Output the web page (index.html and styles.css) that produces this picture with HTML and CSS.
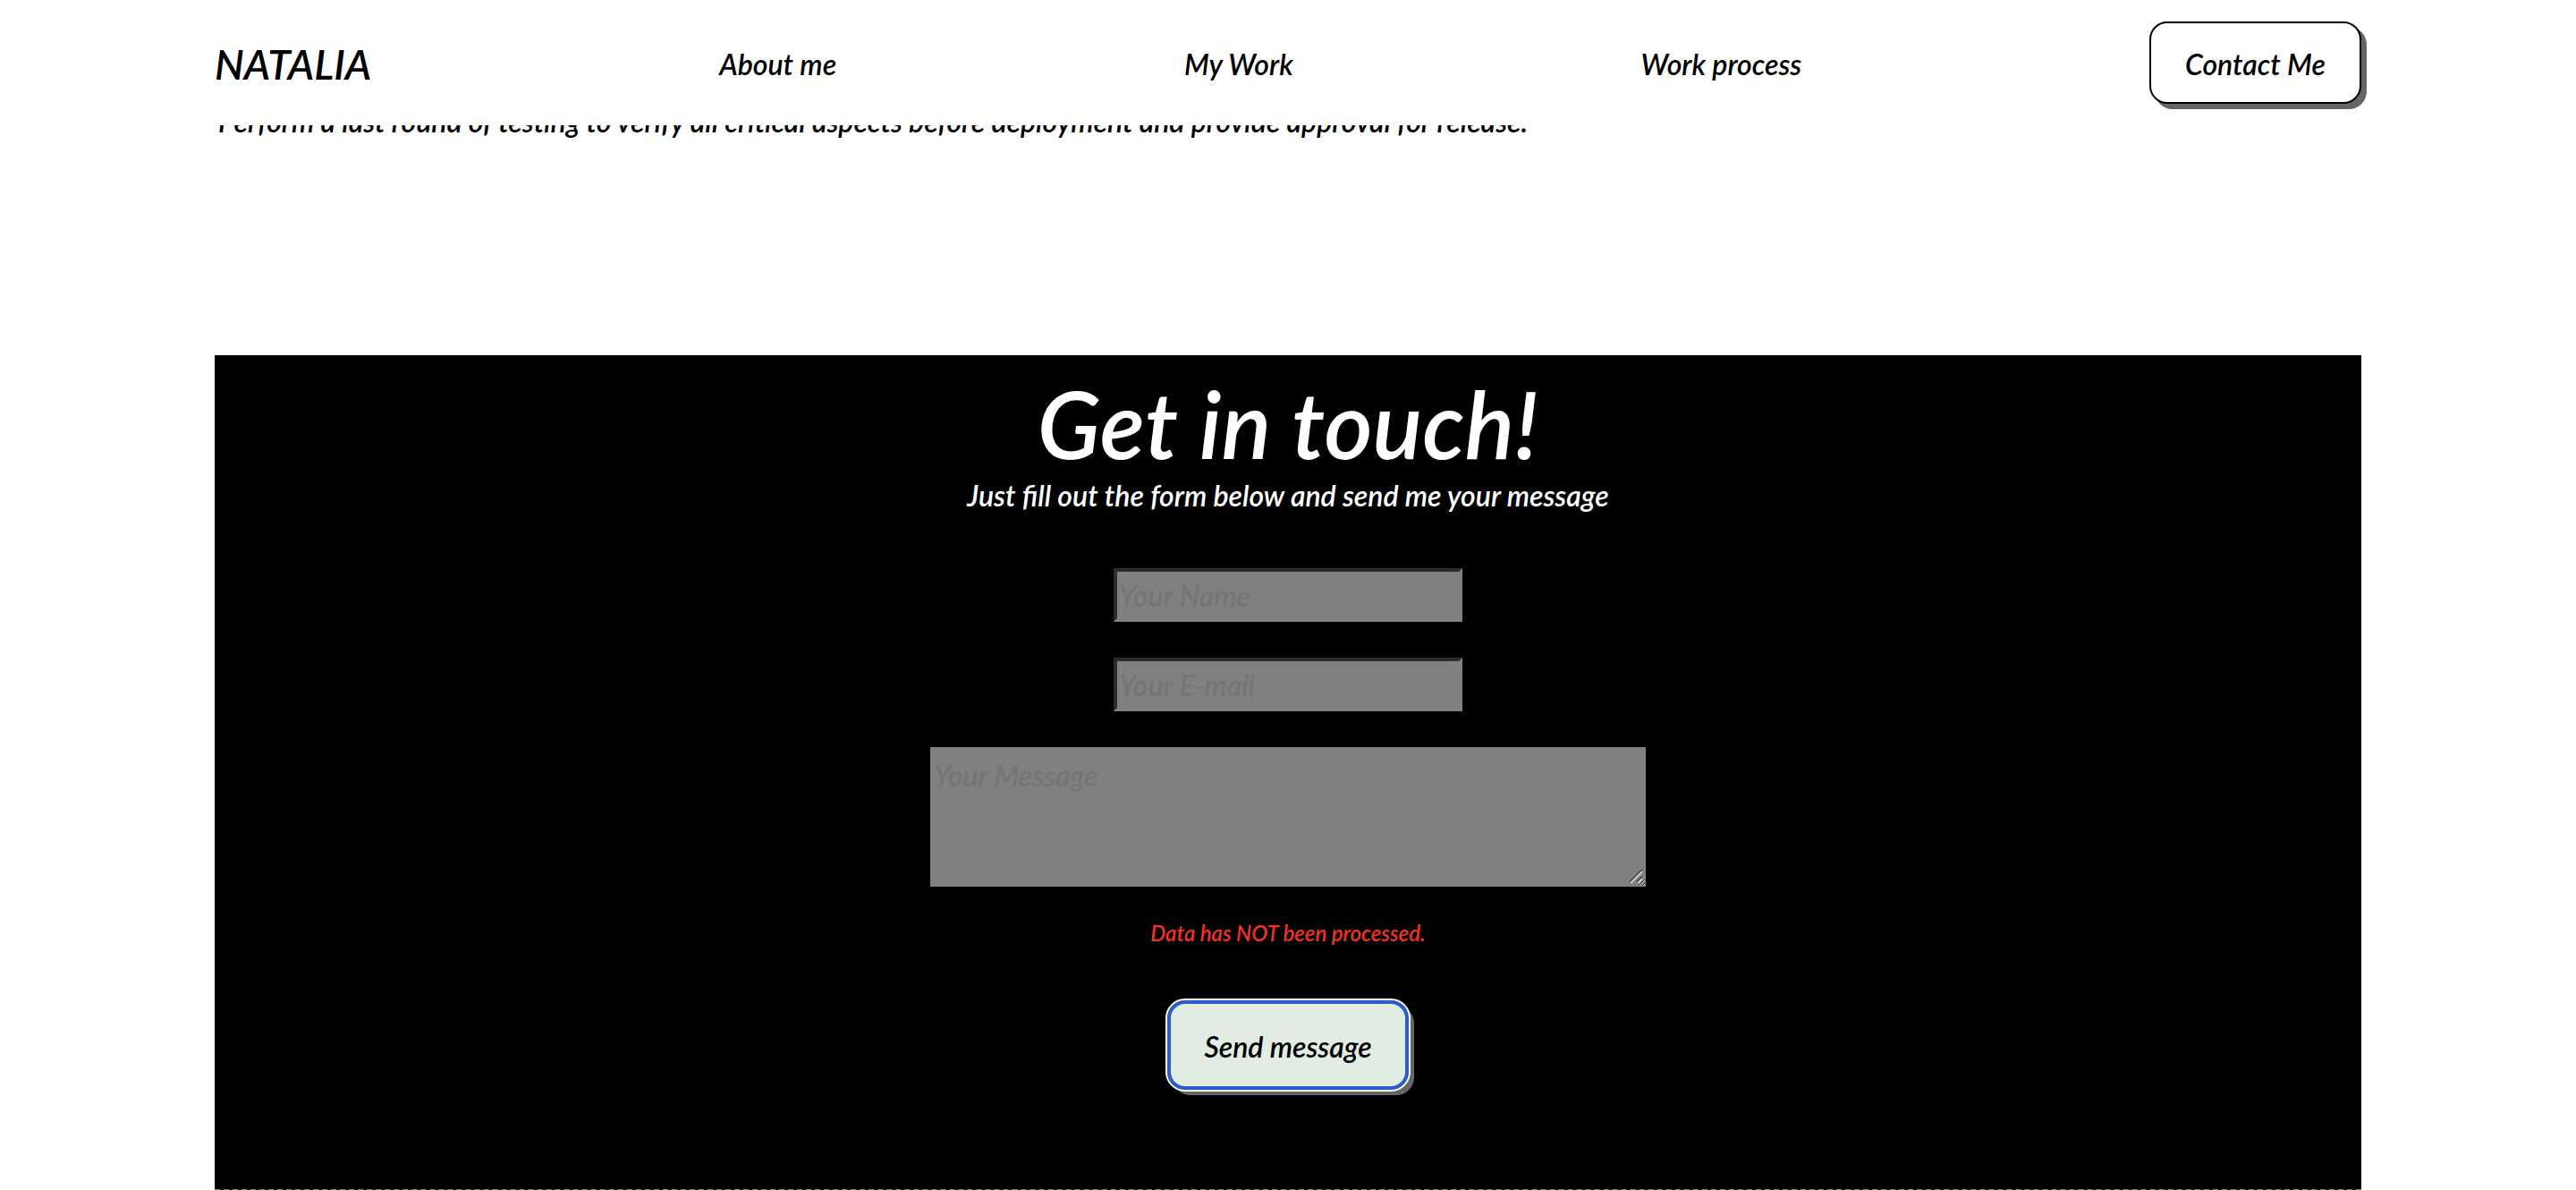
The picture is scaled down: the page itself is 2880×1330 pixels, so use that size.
FILE: index.html
```html
<!DOCTYPE html>
<html lang="en">
<head>
<meta charset="utf-8">
<meta name="viewport" content="width=device-width, initial-scale=1">
<title>Natalia</title>
<link rel="stylesheet" href="styles.css">
</head>
<body>
<header class="header">
  <nav class="nav">
    <a class="logo" href="#top">NATALIA</a>
    <a class="nav-link" href="#about">About me</a>
    <a class="nav-link" href="#work">My Work</a>
    <a class="nav-link" href="#process">Work process</a>
    <button class="button contact-button" type="button">Contact Me</button>
  </nav>
</header>
<main class="page">
  <section class="process" id="process">
    <p class="process-text">Perform a last round of testing to verify all critical aspects before deployment and provide approval for release.</p>
  </section>
  <section class="contact" id="contact">
    <h2 class="contact-title">Get in touch!</h2>
    <p class="contact-lead">Just fill out the form below and send me your message</p>
    <form class="form">
      <input class="field" type="text" placeholder="Your Name" aria-label="Your Name">
      <input class="field" type="email" placeholder="Your E-mail" aria-label="Your E-mail">
      <div class="message-box">
        <textarea class="field message" placeholder="Your Message" aria-label="Your Message"></textarea>
        <svg class="grip" viewBox="0 0 16 16" width="16" height="16" aria-hidden="true">
          <path d="M1 14L15 0M9 14L15 8" stroke="#3c3c3c" stroke-width="2"/>
          <path d="M2 15L15 2M10 15L15 10" stroke="#ccc" stroke-width="2"/>
        </svg>
      </div>
      <p class="error" role="alert">Data has NOT been processed.</p>
      <button class="button send-button" type="button">Send message</button>
    </form>
  </section>
</main>
</body>
</html>
```

FILE: styles.css
```css
* {
  box-sizing: border-box;
}

body {
  margin: 0;
  background: #fff;
  color: #000;
  font-family: Lato, "Open Sans", sans-serif;
  font-size: 32px;
  font-style: italic;
  font-weight: 600;
  line-height: 40px;
}

h2,
p {
  margin: 0;
}

.header {
  position: fixed;
  inset: 0 0 auto;
  z-index: 1;
  padding: 24px 8.3333%;
  background: #fff;
}

.nav {
  display: flex;
  align-items: center;
  justify-content: space-between;
}

.logo,
.nav-link {
  padding-top: 4px;
  color: inherit;
  text-decoration: none;
}

.logo {
  font-size: 46px;
}

.button {
  border: 2px solid #000;
  border-radius: 20px;
  color: #000;
  font: inherit;
  box-shadow: 6px 6px 0 #666;
}

.contact-button {
  padding: 26px 38px 22px;
  background: #fff;
}

.page {
  padding: 116px 8.3333% 0;
}

.process {
  padding: 0 4px 241px;
}

.contact {
  display: flex;
  flex-direction: column;
  align-items: center;
  padding: 14px 24px 111px;
  border-bottom: 2px dashed #888;
  background: #000;
  color: #fff;
}

.contact-title {
  font-size: 104px;
  font-weight: 600;
  line-height: 124px;
}

.contact-lead {
  line-height: 38px;
}

.form {
  display: flex;
  flex-direction: column;
  align-items: center;
  gap: 40px;
  width: 100%;
  padding-top: 62px;
}

.field {
  width: 390px;
  height: 60px;
  padding: 2px;
  border: 4px solid;
  border-color: #2c2c2c #808080 #808080 #2c2c2c;
  border-radius: 0;
  background: #808080;
  color: #000;
  font: inherit;
}

.field::placeholder {
  color: #757575;
}

.message-box {
  position: relative;
  width: 800px;
  max-width: 100%;
}

.message {
  display: block;
  width: 100%;
  height: 156px;
  padding: 12px 4px;
  border: 0;
}

.grip {
  position: absolute;
  right: 3px;
  bottom: 3px;
  pointer-events: none;
}

.error {
  color: #f03224;
  font-size: 24px;
  line-height: 24px;
}

.send-button {
  margin-top: 23px;
  padding: 28px 37px 24px;
  border: 4px solid #275fc9;
  background: #e1ece2;
  outline: 2px solid #fff;
}
```
